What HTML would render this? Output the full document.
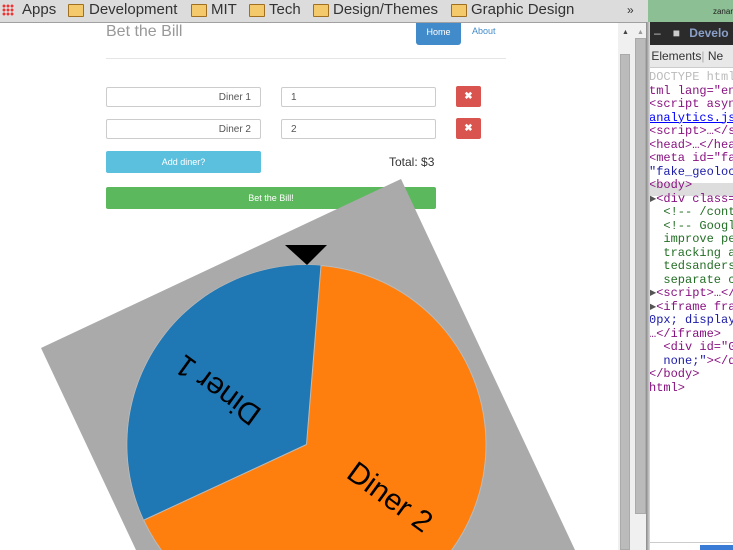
<!DOCTYPE html>
<html><head><style>
html,body{margin:0;width:733px;height:550px;overflow:hidden}
body{position:relative;font-family:"Liberation Sans",sans-serif;background:#fff}
.a{position:absolute}
.inp{position:absolute;height:20px;border:1px solid #ccc;border-radius:2px;font-size:10px;color:#555;line-height:20px;box-sizing:border-box}
.x{position:absolute;width:25px;height:21px;background:#d9534f;border-radius:2px;color:#fff;font-size:10px;text-align:center;line-height:21px;font-weight:bold}
.mono{font-family:"Liberation Mono","DejaVu Sans Mono",monospace;font-size:12px;line-height:13.5px;white-space:pre;color:#881280}
</style></head><body>
<div class="a" style="left:0;top:0;width:648px;height:22px;background:#dcdcdc;border-bottom:1px solid #a0a0a0;font-size:15px;color:#333;line-height:20px;white-space:nowrap">
<span class="a" style="left:2px;top:4px;width:12px;height:12px;background:
radial-gradient(circle,#e33 1.3px,transparent 1.6px) 0 0/4px 4px"></span>
<span class="a" style="left:22px;top:0">Apps</span>
<span class="a" style="left:68px;top:4px;width:14px;height:11px;background:#f4c96b;border:1px solid #a07020;border-radius:1px"></span><span class="a" style="left:89px;top:0">Development</span>
<span class="a" style="left:191px;top:4px;width:14px;height:11px;background:#f4c96b;border:1px solid #a07020;border-radius:1px"></span><span class="a" style="left:211px;top:0">MIT</span>
<span class="a" style="left:249px;top:4px;width:14px;height:11px;background:#f4c96b;border:1px solid #a07020;border-radius:1px"></span><span class="a" style="left:269px;top:0">Tech</span>
<span class="a" style="left:313px;top:4px;width:14px;height:11px;background:#f4c96b;border:1px solid #a07020;border-radius:1px"></span><span class="a" style="left:333px;top:0">Design/Themes</span>
<span class="a" style="left:451px;top:4px;width:14px;height:11px;background:#f4c96b;border:1px solid #a07020;border-radius:1px"></span><span class="a" style="left:471px;top:0">Graphic Design</span>
<span class="a" style="left:627px;top:0;font-size:12px">»</span>
</div>
<div class="a" style="left:106px;top:23px;font-size:16px;color:#999">Bet the Bill</div>
<div class="a" style="left:416px;top:23px;width:45px;height:22px;background:#428bca;border-radius:0 0 3px 3px;color:#fff;font-size:9px;text-align:center;line-height:18px">Home</div>
<div class="a" style="left:472px;top:26px;font-size:9px;color:#428bca">About</div>
<div class="a" style="left:106px;top:58px;width:400px;height:1px;background:#e5e5e5"></div>
<div class="inp" style="left:106px;top:87px;width:155px;text-align:right;padding-right:9px">Diner 1</div>
<div class="inp" style="left:281px;top:87px;width:155px;padding-left:9px">1</div>
<div class="x" style="left:456px;top:86px">✖</div>
<div class="inp" style="left:106px;top:119px;width:155px;text-align:right;padding-right:9px">Diner 2</div>
<div class="inp" style="left:281px;top:119px;width:155px;padding-left:9px">2</div>
<div class="x" style="left:456px;top:118px">✖</div>
<div class="a" style="left:106px;top:151px;width:155px;height:22px;background:#5bc0de;border-radius:2px;color:#fff;font-size:9px;text-align:center;line-height:22px">Add diner?</div>
<div class="a" style="left:389px;top:155px;font-size:12px;color:#333">Total: $3</div>
<div class="a" style="left:106px;top:187px;width:330px;height:22px;background:#5cb85c;border-radius:2px;color:#fff;font-size:9px;text-align:center;line-height:22px">Bet the Bill!</div>
<svg class="a" style="left:0;top:0" width="618" height="550">
<polygon points="401,179 41,348 136,550 575,550" fill="#aaa"/>
<circle cx="306.5" cy="444.5" r="179.5" fill="#ff7f0e" stroke="#bbb" stroke-width="1"/>
<path d="M306.5,444.5 L321,265.5 A179.5,179.5 0 0 0 144,520 Z" fill="#1f77b4"/>
<path d="M306.5,444.5 L321,265.5 M306.5,444.5 L144,520" stroke="#bbb" stroke-width="1"/>
<polygon points="285,245 327,245 307,265" fill="#000"/>
<text x="0" y="10" transform="translate(218,390) rotate(216)" font-family="Liberation Sans" font-size="30" text-anchor="middle">Diner 1</text>
<text x="0" y="10" transform="translate(390,497) rotate(36)" font-family="Liberation Sans" font-size="30" text-anchor="middle">Diner 2</text>
</svg>
<div class="a" style="left:618px;top:23px;width:30px;height:527px;background:#f0f0f0"></div>
<div class="a" style="left:620px;top:54px;width:10px;height:496px;background:#bbb;border:1px solid #aaa;box-sizing:border-box"></div>
<div class="a" style="left:635px;top:38px;width:11px;height:476px;background:#bbb;border:1px solid #aaa;box-sizing:border-box"></div>
<div class="a" style="left:622px;top:29px;font-size:7px;color:#444">▲</div>
<div class="a" style="left:637px;top:29px;font-size:7px;color:#999">▲</div>
<div class="a" style="left:648px;top:0;width:85px;height:22px;background:#8cbf94;font-size:8px;color:#222;text-align:right;line-height:24px">zanar</div>
<div class="a" style="left:648px;top:22px;width:85px;height:23px;background:#2b2b2b;color:#8aa0c8;font-size:12px;line-height:23px;white-space:nowrap"><span style="color:#ccc;margin:0 12px 0 6px">–</span><span style="color:#ccc">■</span> <span style="margin-left:6px;font-weight:bold">Develo</span></div>
<div class="a" style="left:648px;top:45px;width:85px;height:22px;background:#e8e8e8;border-bottom:1px solid #ccc;font-size:12px;line-height:22px;color:#333;white-space:nowrap">&nbsp;Elements<span style="color:#aaa">|</span> Ne</div>
<div class="a" style="left:648px;top:68px;width:85px;height:482px;background:#fff;overflow:hidden">
<div class="a" style="left:0;top:115px;width:85px;height:13px;background:#ddd"></div>
<div class="mono" style="position:absolute;left:1px;top:3px"><span style="color:#bbb">DOCTYPE html</span>
tml lang="en
&lt;script asyn
<span style="color:#00f;text-decoration:underline">analytics.js</span>
&lt;script&gt;…&lt;/s
&lt;head&gt;…&lt;/hea
&lt;meta id="fa
<span style="color:#1a1aa6">"fake_geoloc</span>
&lt;body&gt;
<span style="color:#555">▶</span>&lt;div class=
  <span style="color:#236e25">&lt;!-- /conta
  &lt;!-- Google
  improve per
  tracking ac
  tedsanders.
  separate co</span>
<span style="color:#555">▶</span>&lt;script&gt;…&lt;/
<span style="color:#555">▶</span>&lt;iframe fra
<span style="color:#1a1aa6">0px; display</span>
…&lt;/iframe&gt;
  &lt;div id="GO
  <span style="color:#1a1aa6">none;"</span>&gt;&lt;/di
&lt;/body&gt;
html&gt;</div>
<div class="a" style="left:0;top:474px;width:85px;height:1px;background:#ccc"></div>
<div class="a" style="left:52px;top:477px;width:33px;height:8px;background:#3a7bd5"></div>
</div>
<div class="a" style="left:646px;top:22px;width:4px;height:528px;background:linear-gradient(90deg,#888,#ddd)"></div>
</body></html>
